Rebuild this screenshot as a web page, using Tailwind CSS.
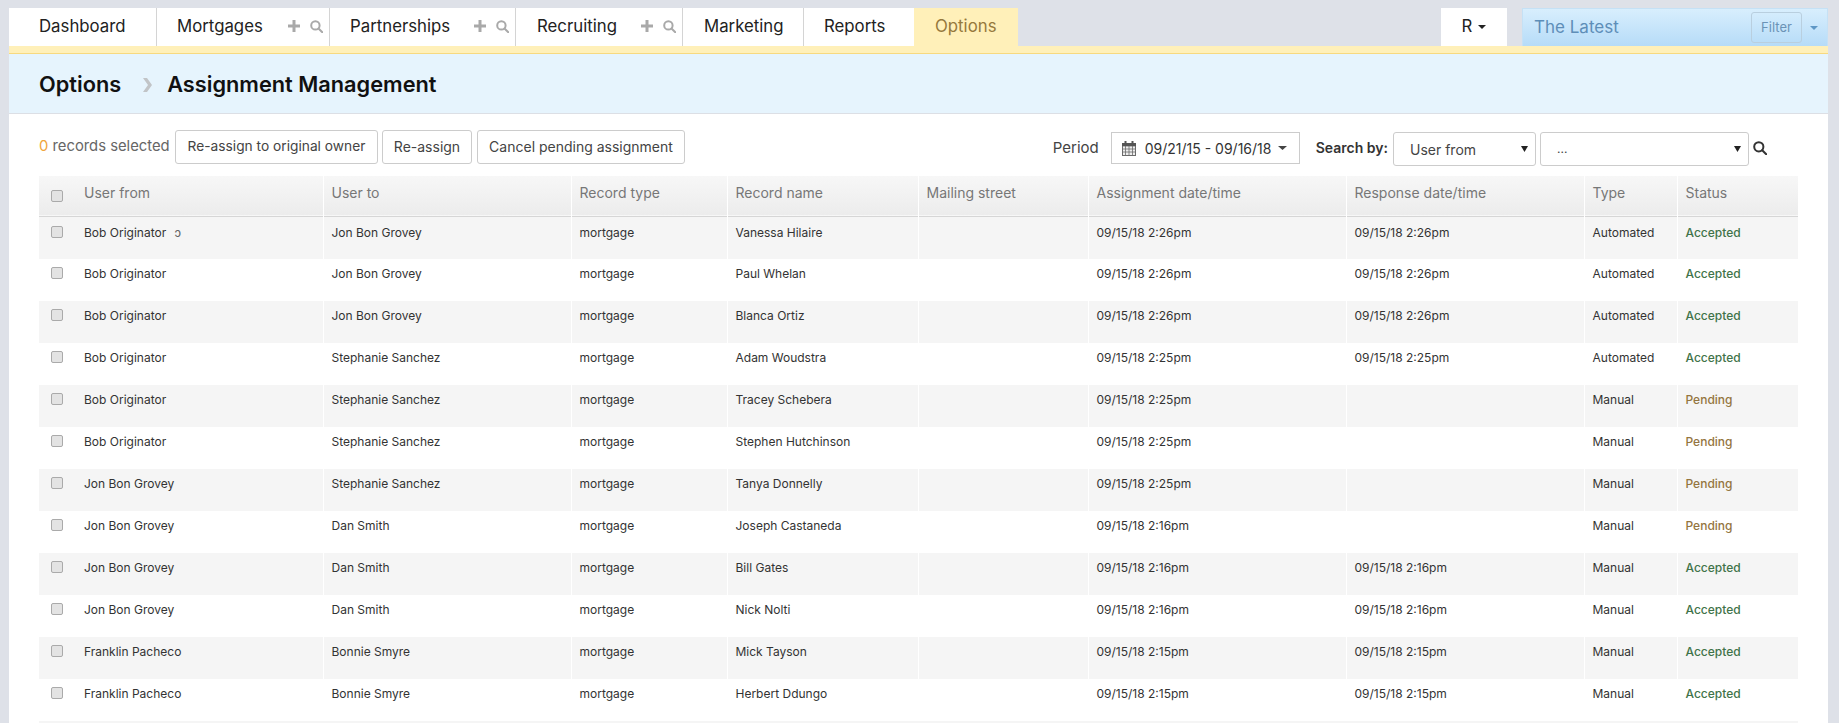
<!DOCTYPE html>
<html lang="en">
<head>
<meta charset="utf-8">
<title>Assignment Management</title>
<script src="https://cdn.jsdelivr.net/npm/@tailwindcss/browser@4"></script>
</head>
<body class="bg-[#dee1e8] h-[723px] overflow-hidden font-['Inter','Liberation_Sans',sans-serif] text-[#333]">
<div class="ml-[9px] mr-[11px] pt-[8px]">
  <!-- top nav -->
  <div class="flex h-[38px] items-stretch text-[16.8px] text-[#222] leading-[37px]">
    <div class="w-[148px] bg-white border-r border-[#d4d4d4] pl-[30px]">Dashboard</div>
    <div class="w-[173px] bg-white border-r border-[#d4d4d4] pl-[20px] pr-[6px] flex items-start">
      <span>Mortgages</span>
      <svg class="mt-[12px] ml-auto" width="12" height="12" viewBox="0 0 12 12"><path d="M4.5 0h3v4.5H12v3H7.500V12h-3V7.500H0v-3h4.500z" fill="#a9a9a9"/></svg>
      <svg class="mt-[12px] ml-[10px]" width="13" height="13" viewBox="0 0 13 13" fill="none" stroke="#a9a9a9" stroke-width="2"><circle cx="5.400" cy="5.400" r="4.200"/><path d="M8.500 8.500l3.800 3.800" stroke-linecap="round"/></svg>
    </div>
    <div class="w-[186px] bg-white border-r border-[#d4d4d4] pl-[20px] pr-[6px] flex items-start">
      <span>Partnerships</span>
      <svg class="mt-[12px] ml-auto" width="12" height="12" viewBox="0 0 12 12"><path d="M4.5 0h3v4.5H12v3H7.500V12h-3V7.500H0v-3h4.500z" fill="#a9a9a9"/></svg>
      <svg class="mt-[12px] ml-[10px]" width="13" height="13" viewBox="0 0 13 13" fill="none" stroke="#a9a9a9" stroke-width="2"><circle cx="5.400" cy="5.400" r="4.200"/><path d="M8.500 8.500l3.800 3.800" stroke-linecap="round"/></svg>
    </div>
    <div class="w-[167px] bg-white border-r border-[#d4d4d4] pl-[21px] pr-[6px] flex items-start">
      <span>Recruiting</span>
      <svg class="mt-[12px] ml-auto" width="12" height="12" viewBox="0 0 12 12"><path d="M4.5 0h3v4.5H12v3H7.500V12h-3V7.500H0v-3h4.500z" fill="#a9a9a9"/></svg>
      <svg class="mt-[12px] ml-[10px]" width="13" height="13" viewBox="0 0 13 13" fill="none" stroke="#a9a9a9" stroke-width="2"><circle cx="5.400" cy="5.400" r="4.200"/><path d="M8.500 8.500l3.800 3.800" stroke-linecap="round"/></svg>
    </div>
    <div class="w-[121px] bg-white border-r border-[#d4d4d4] pl-[21px]">Marketing</div>
    <div class="w-[110px] bg-white pl-[20px]">Reports</div>
    <div class="w-[104px] bg-[#fff0b9] pl-[21px] text-[#96793c]">Options</div>
    <div class="flex-1"></div>
    <div class="w-[66px] bg-white mr-[15px] flex items-start justify-center">R<svg class="ml-[6px] mt-[17px]" width="8" height="4" viewBox="0 0 8 4"><path d="M0 0h8L4 4z" fill="#222"/></svg></div>
    <div class="w-[306px] bg-gradient-to-b from-[#d8eefd] to-[#b6dcf8] border-t border-x border-[#c5e1f5] flex items-start pl-[11px] relative">
      <span class="text-[17px] leading-[36px] text-[#5e8eb8]">The Latest</span>
      <div class="ml-auto mr-[25px] mt-[3px] w-[51px] h-[31px] rounded-[3px] border border-[#b9cfdf] text-[13px] leading-none text-[#6b93b6] flex items-center justify-center">Filter</div>
      <svg class="absolute right-[9px] top-[17px]" width="8" height="4" viewBox="0 0 8 4"><path d="M0 0h8L4 4z" fill="#5f97c5"/></svg>
    </div>
  </div>
  <!-- yellow strip -->
  <div class="h-[8px] bg-[#fff0b9] border-b border-[#f7d97f]"></div>
  <!-- heading band -->
  <div class="h-[60px] bg-[#e6f4fd] border-b border-[#dcdfe5] pl-[30px] pt-[2px] flex items-center text-[21.75px] font-semibold text-[#111]">
    <span>Options</span>
    <svg class="ml-[21px] mr-[14px]" width="11" height="14" viewBox="0 0 11 14"><path d="M1 0h4l5 7-5 7H1l5-7z" fill="#c1c4c7"/></svg>
    <span>Assignment Management</span>
  </div>
  <!-- content -->
  <div class="bg-white h-[609px] overflow-hidden pl-[30px] pr-[30px]">
    <div class="flex items-start h-[62px] pt-[16px] text-[14px]">
      <div class="w-[136px] text-[14.8px] whitespace-nowrap leading-[33px] text-[#666]"><span class="text-[#f0a53c]">0</span> records selected</div>
      <div class="h-[34px] w-[203px] pb-[2px] border border-[#ccc] rounded-[3px] flex items-center justify-center text-[13.75px] text-[#444] mr-[4px]">Re-assign to original owner</div>
      <div class="h-[34px] w-[90px] pb-[2px] border border-[#ccc] rounded-[3px] flex items-center justify-center text-[#444] mr-[5px]">Re-assign</div>
      <div class="h-[34px] w-[208px] pb-[2px] border border-[#ccc] rounded-[3px] flex items-center justify-center text-[#444]">Cancel pending assignment</div>
      <div class="ml-auto mr-[31px] flex items-start">
        <span class="text-[15px] leading-[33px] text-[#444] mr-[12px] pt-[1px]">Period</span>
        <div class="mt-[2px] h-[32px] w-[189px] border border-[#ccc] flex items-center pl-[10px] text-[#333] whitespace-nowrap">
          <svg width="14" height="15" viewBox="0 0 14 15" fill="none" stroke="#6b6b6b"><rect x=".5" y="2.500" width="13" height="12" fill="#eee"/><path d="M0 5h14M.5 8h13M.5 11h13M3.500 5v9M7 5v9M10.500 5v9" stroke-width=".8"/><rect x="0" y="2" width="14" height="3" fill="#555" stroke="none"/><path d="M3.500 0v3.500M10.500 0v3.500" stroke-width="2" stroke="#555"/></svg>
          <span class="ml-[9px]">09/21/15 - 09/16/18</span>
          <svg class="ml-[7px]" width="9" height="4" viewBox="0 0 9 4"><path d="M0 0h9L4.500 4z" fill="#444"/></svg>
        </div>
        <span class="ml-[16px] leading-[33px] font-semibold text-[#333] mr-[5px] pt-[1px] whitespace-nowrap">Search by:</span>
        <div class="mt-[2px] h-[34px] w-[143px] border border-[#ccc] rounded-[3px] flex items-center pl-[16px] pr-[7px] justify-between text-[#444]">User from<svg width="7" height="6" viewBox="0 0 7 6"><path d="M0 0h7L3.500 6z" fill="#222"/></svg></div>
        <div class="mt-[2px] ml-[4px] h-[34px] w-[209px] border border-[#ccc] rounded-[3px] flex items-center pl-[16px] pr-[7px] justify-between text-[12px] text-[#444]">...<svg width="7" height="6" viewBox="0 0 7 6"><path d="M0 0h7L3.500 6z" fill="#222"/></svg></div>
        <svg class="mt-[11px] ml-[4px]" width="14" height="14" viewBox="0 0 14 14" fill="none" stroke="#333" stroke-width="2"><circle cx="5.800" cy="5.800" r="4.600"/><path d="M9.200 9.200l4 4" stroke-linecap="round"/></svg>
      </div>
    </div>
    <table class="table-fixed w-[1759px] text-[12px] text-[#333]">
      <colgroup>
        <col class="w-[45px]"><col class="w-[239px]"><col class="w-[248px]"><col class="w-[156px]"><col class="w-[191px]"><col class="w-[170px]"><col class="w-[258px]"><col class="w-[238px]"><col class="w-[93px]"><col class="w-[121px]">
      </colgroup>
      <thead>
        <tr class="h-[40px] bg-gradient-to-b from-[#f7f7f7] to-[#ececec] border-b border-[#d6d6d6] text-[14px] text-[#777] text-left">
          <th class="font-normal align-top pl-[12px] pt-[14px]"><div class="w-[12px] h-[12px] rounded-[2px] border border-[#aaa] bg-[#e3e3e3]"></div></th>
          <th class="font-normal align-top pt-[6px]">User from</th>
          <th class="font-normal align-top pt-[6px] pl-[8px] border-l border-white">User to</th>
          <th class="font-normal align-top pt-[6px] pl-[8px] border-l border-white">Record type</th>
          <th class="font-normal align-top pt-[6px] pl-[8px] border-l border-white">Record name</th>
          <th class="font-normal align-top pt-[6px] pl-[8px] border-l border-white">Mailing street</th>
          <th class="font-normal align-top pt-[6px] pl-[8px] border-l border-white">Assignment date/time</th>
          <th class="font-normal align-top pt-[6px] pl-[8px] border-l border-white">Response date/time</th>
          <th class="font-normal align-top pt-[6px] pl-[8px] border-l border-white">Type</th>
          <th class="font-normal align-top pt-[6px] pl-[8px] border-l border-white">Status</th>
        </tr>
      </thead>
      <tbody>
        <tr class="h-[43px] bg-[#f5f5f5]"><td class="align-top pl-[12px] pt-[9px]"><div class="w-[12px] h-[12px] rounded-[2px] border border-[#aaa] bg-[#e3e3e3]"></div></td><td class="align-top pt-[7px]">Bob Originator <span class="ml-[5px] text-[#666]">ɔ</span></td><td class="align-top pt-[7px] pl-[8px] border-l border-white">Jon Bon Grovey</td><td class="align-top pt-[7px] pl-[8px] border-l border-white">mortgage</td><td class="align-top pt-[7px] pl-[8px] border-l border-white">Vanessa Hilaire</td><td class="border-l border-white"></td><td class="align-top pt-[7px] pl-[8px] border-l border-white">09/15/18 2:26pm</td><td class="align-top pt-[7px] pl-[8px] border-l border-white">09/15/18 2:26pm</td><td class="align-top pt-[7px] pl-[8px] border-l border-white">Automated</td><td class="align-top pt-[7px] pl-[8px] border-l border-white font-medium text-[#3f7349]">Accepted</td></tr>
        <tr class="h-[42px] bg-white"><td class="align-top pl-[12px] pt-[8px]"><div class="w-[12px] h-[12px] rounded-[2px] border border-[#aaa] bg-[#e3e3e3]"></div></td><td class="align-top pt-[6px]">Bob Originator</td><td class="align-top pt-[6px] pl-[8px] border-l border-white">Jon Bon Grovey</td><td class="align-top pt-[6px] pl-[8px] border-l border-white">mortgage</td><td class="align-top pt-[6px] pl-[8px] border-l border-white">Paul Whelan</td><td class="border-l border-white"></td><td class="align-top pt-[6px] pl-[8px] border-l border-white">09/15/18 2:26pm</td><td class="align-top pt-[6px] pl-[8px] border-l border-white">09/15/18 2:26pm</td><td class="align-top pt-[6px] pl-[8px] border-l border-white">Automated</td><td class="align-top pt-[6px] pl-[8px] border-l border-white font-medium text-[#3f7349]">Accepted</td></tr>
        <tr class="h-[42px] bg-[#f5f5f5]"><td class="align-top pl-[12px] pt-[8px]"><div class="w-[12px] h-[12px] rounded-[2px] border border-[#aaa] bg-[#e3e3e3]"></div></td><td class="align-top pt-[6px]">Bob Originator</td><td class="align-top pt-[6px] pl-[8px] border-l border-white">Jon Bon Grovey</td><td class="align-top pt-[6px] pl-[8px] border-l border-white">mortgage</td><td class="align-top pt-[6px] pl-[8px] border-l border-white">Blanca Ortiz</td><td class="border-l border-white"></td><td class="align-top pt-[6px] pl-[8px] border-l border-white">09/15/18 2:26pm</td><td class="align-top pt-[6px] pl-[8px] border-l border-white">09/15/18 2:26pm</td><td class="align-top pt-[6px] pl-[8px] border-l border-white">Automated</td><td class="align-top pt-[6px] pl-[8px] border-l border-white font-medium text-[#3f7349]">Accepted</td></tr>
        <tr class="h-[42px] bg-white"><td class="align-top pl-[12px] pt-[8px]"><div class="w-[12px] h-[12px] rounded-[2px] border border-[#aaa] bg-[#e3e3e3]"></div></td><td class="align-top pt-[6px]">Bob Originator</td><td class="align-top pt-[6px] pl-[8px] border-l border-white">Stephanie Sanchez</td><td class="align-top pt-[6px] pl-[8px] border-l border-white">mortgage</td><td class="align-top pt-[6px] pl-[8px] border-l border-white">Adam Woudstra</td><td class="border-l border-white"></td><td class="align-top pt-[6px] pl-[8px] border-l border-white">09/15/18 2:25pm</td><td class="align-top pt-[6px] pl-[8px] border-l border-white">09/15/18 2:25pm</td><td class="align-top pt-[6px] pl-[8px] border-l border-white">Automated</td><td class="align-top pt-[6px] pl-[8px] border-l border-white font-medium text-[#3f7349]">Accepted</td></tr>
        <tr class="h-[42px] bg-[#f5f5f5]"><td class="align-top pl-[12px] pt-[8px]"><div class="w-[12px] h-[12px] rounded-[2px] border border-[#aaa] bg-[#e3e3e3]"></div></td><td class="align-top pt-[6px]">Bob Originator</td><td class="align-top pt-[6px] pl-[8px] border-l border-white">Stephanie Sanchez</td><td class="align-top pt-[6px] pl-[8px] border-l border-white">mortgage</td><td class="align-top pt-[6px] pl-[8px] border-l border-white">Tracey Schebera</td><td class="border-l border-white"></td><td class="align-top pt-[6px] pl-[8px] border-l border-white">09/15/18 2:25pm</td><td class="border-l border-white"></td><td class="align-top pt-[6px] pl-[8px] border-l border-white">Manual</td><td class="align-top pt-[6px] pl-[8px] border-l border-white font-medium text-[#94753f]">Pending</td></tr>
        <tr class="h-[42px] bg-white"><td class="align-top pl-[12px] pt-[8px]"><div class="w-[12px] h-[12px] rounded-[2px] border border-[#aaa] bg-[#e3e3e3]"></div></td><td class="align-top pt-[6px]">Bob Originator</td><td class="align-top pt-[6px] pl-[8px] border-l border-white">Stephanie Sanchez</td><td class="align-top pt-[6px] pl-[8px] border-l border-white">mortgage</td><td class="align-top pt-[6px] pl-[8px] border-l border-white">Stephen Hutchinson</td><td class="border-l border-white"></td><td class="align-top pt-[6px] pl-[8px] border-l border-white">09/15/18 2:25pm</td><td class="border-l border-white"></td><td class="align-top pt-[6px] pl-[8px] border-l border-white">Manual</td><td class="align-top pt-[6px] pl-[8px] border-l border-white font-medium text-[#94753f]">Pending</td></tr>
        <tr class="h-[42px] bg-[#f5f5f5]"><td class="align-top pl-[12px] pt-[8px]"><div class="w-[12px] h-[12px] rounded-[2px] border border-[#aaa] bg-[#e3e3e3]"></div></td><td class="align-top pt-[6px]">Jon Bon Grovey</td><td class="align-top pt-[6px] pl-[8px] border-l border-white">Stephanie Sanchez</td><td class="align-top pt-[6px] pl-[8px] border-l border-white">mortgage</td><td class="align-top pt-[6px] pl-[8px] border-l border-white">Tanya Donnelly</td><td class="border-l border-white"></td><td class="align-top pt-[6px] pl-[8px] border-l border-white">09/15/18 2:25pm</td><td class="border-l border-white"></td><td class="align-top pt-[6px] pl-[8px] border-l border-white">Manual</td><td class="align-top pt-[6px] pl-[8px] border-l border-white font-medium text-[#94753f]">Pending</td></tr>
        <tr class="h-[42px] bg-white"><td class="align-top pl-[12px] pt-[8px]"><div class="w-[12px] h-[12px] rounded-[2px] border border-[#aaa] bg-[#e3e3e3]"></div></td><td class="align-top pt-[6px]">Jon Bon Grovey</td><td class="align-top pt-[6px] pl-[8px] border-l border-white">Dan Smith</td><td class="align-top pt-[6px] pl-[8px] border-l border-white">mortgage</td><td class="align-top pt-[6px] pl-[8px] border-l border-white">Joseph Castaneda</td><td class="border-l border-white"></td><td class="align-top pt-[6px] pl-[8px] border-l border-white">09/15/18 2:16pm</td><td class="border-l border-white"></td><td class="align-top pt-[6px] pl-[8px] border-l border-white">Manual</td><td class="align-top pt-[6px] pl-[8px] border-l border-white font-medium text-[#94753f]">Pending</td></tr>
        <tr class="h-[42px] bg-[#f5f5f5]"><td class="align-top pl-[12px] pt-[8px]"><div class="w-[12px] h-[12px] rounded-[2px] border border-[#aaa] bg-[#e3e3e3]"></div></td><td class="align-top pt-[6px]">Jon Bon Grovey</td><td class="align-top pt-[6px] pl-[8px] border-l border-white">Dan Smith</td><td class="align-top pt-[6px] pl-[8px] border-l border-white">mortgage</td><td class="align-top pt-[6px] pl-[8px] border-l border-white">Bill Gates</td><td class="border-l border-white"></td><td class="align-top pt-[6px] pl-[8px] border-l border-white">09/15/18 2:16pm</td><td class="align-top pt-[6px] pl-[8px] border-l border-white">09/15/18 2:16pm</td><td class="align-top pt-[6px] pl-[8px] border-l border-white">Manual</td><td class="align-top pt-[6px] pl-[8px] border-l border-white font-medium text-[#3f7349]">Accepted</td></tr>
        <tr class="h-[42px] bg-white"><td class="align-top pl-[12px] pt-[8px]"><div class="w-[12px] h-[12px] rounded-[2px] border border-[#aaa] bg-[#e3e3e3]"></div></td><td class="align-top pt-[6px]">Jon Bon Grovey</td><td class="align-top pt-[6px] pl-[8px] border-l border-white">Dan Smith</td><td class="align-top pt-[6px] pl-[8px] border-l border-white">mortgage</td><td class="align-top pt-[6px] pl-[8px] border-l border-white">Nick Nolti</td><td class="border-l border-white"></td><td class="align-top pt-[6px] pl-[8px] border-l border-white">09/15/18 2:16pm</td><td class="align-top pt-[6px] pl-[8px] border-l border-white">09/15/18 2:16pm</td><td class="align-top pt-[6px] pl-[8px] border-l border-white">Manual</td><td class="align-top pt-[6px] pl-[8px] border-l border-white font-medium text-[#3f7349]">Accepted</td></tr>
        <tr class="h-[42px] bg-[#f5f5f5]"><td class="align-top pl-[12px] pt-[8px]"><div class="w-[12px] h-[12px] rounded-[2px] border border-[#aaa] bg-[#e3e3e3]"></div></td><td class="align-top pt-[6px]">Franklin Pacheco</td><td class="align-top pt-[6px] pl-[8px] border-l border-white">Bonnie Smyre</td><td class="align-top pt-[6px] pl-[8px] border-l border-white">mortgage</td><td class="align-top pt-[6px] pl-[8px] border-l border-white">Mick Tayson</td><td class="border-l border-white"></td><td class="align-top pt-[6px] pl-[8px] border-l border-white">09/15/18 2:15pm</td><td class="align-top pt-[6px] pl-[8px] border-l border-white">09/15/18 2:15pm</td><td class="align-top pt-[6px] pl-[8px] border-l border-white">Manual</td><td class="align-top pt-[6px] pl-[8px] border-l border-white font-medium text-[#3f7349]">Accepted</td></tr>
        <tr class="h-[42px] bg-white"><td class="align-top pl-[12px] pt-[8px]"><div class="w-[12px] h-[12px] rounded-[2px] border border-[#aaa] bg-[#e3e3e3]"></div></td><td class="align-top pt-[6px]">Franklin Pacheco</td><td class="align-top pt-[6px] pl-[8px] border-l border-white">Bonnie Smyre</td><td class="align-top pt-[6px] pl-[8px] border-l border-white">mortgage</td><td class="align-top pt-[6px] pl-[8px] border-l border-white">Herbert Ddungo</td><td class="border-l border-white"></td><td class="align-top pt-[6px] pl-[8px] border-l border-white">09/15/18 2:15pm</td><td class="align-top pt-[6px] pl-[8px] border-l border-white">09/15/18 2:15pm</td><td class="align-top pt-[6px] pl-[8px] border-l border-white">Manual</td><td class="align-top pt-[6px] pl-[8px] border-l border-white font-medium text-[#3f7349]">Accepted</td></tr>
        <tr class="h-[42px] bg-[#f5f5f5]"><td colspan="10"></td></tr>
      </tbody>
    </table>
  </div>
</div>
</body>
</html>
